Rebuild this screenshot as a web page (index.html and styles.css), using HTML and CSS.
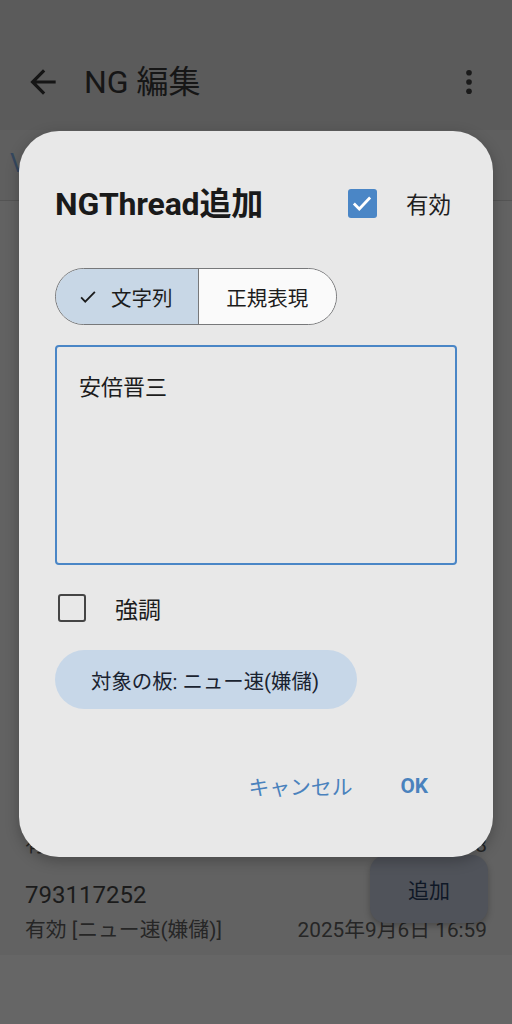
FILE: index.html
```html
<!DOCTYPE html>
<html lang="ja">
<head>
<meta charset="utf-8">
<link rel="stylesheet" href="styles.css">
</head>
<body>
<div class="screen">
  <header class="appbar">
    <svg class="back" viewBox="0 0 24 24" width="38" height="38"><path d="M20 11H7.83l5.59-5.59L12 4l-8 8 8 8 1.41-1.41L7.83 13H20v-2z" fill="#151515"/></svg>
    <div class="app-title">NG 編集</div>
    <svg class="more" viewBox="0 0 24 24" width="26" height="32"><circle cx="12" cy="3.5" r="2.6" fill="#1a1a1a"/><circle cx="12" cy="12" r="2.6" fill="#1a1a1a"/><circle cx="12" cy="20.5" r="2.6" fill="#1a1a1a"/></svg>
  </header>
  <div class="tabs"><span class="tab">V</span></div>
  <div class="list">
    <div class="row">
      <div class="row-id">793117251</div>
      <div class="row-meta"><span>有効 [ニュー速(嫌儲)]</span><span>2025年9月6日 16:58</span></div>
    </div>
    <div class="row">
      <div class="row-id">793117252</div>
      <div class="row-meta"><span>有効 [ニュー速(嫌儲)]</span><span>2025年9月6日 16:59</span></div>
    </div>
  </div>
  <div class="fab">追加</div>

  <div class="dialog">
    <div class="dlg-head">
      <div class="dlg-title">NGThread追加</div>
      <div class="enabled">
        <span class="cb cb-on"><svg viewBox="0 0 24 24" width="26" height="26"><path d="M4.5 12.5l5 5L19.5 7" fill="none" stroke="#fff" stroke-width="2.6"/></svg></span>
        <span class="enabled-label">有効</span>
      </div>
    </div>
    <div class="segmented">
      <div class="seg seg-on"><svg viewBox="0 0 24 24" width="22" height="22"><path d="M4.5 12.5l4.5 4.5L19.5 6.5" fill="none" stroke="#1c1c1c" stroke-width="2"/></svg><span>文字列</span></div>
      <div class="seg">正規表現</div>
    </div>
    <div class="textarea">安倍晋三</div>
    <div class="check-row">
      <span class="cb cb-off"></span>
      <span class="check-label">強調</span>
    </div>
    <div class="chip">対象の板: ニュー速(嫌儲)</div>
    <div class="actions">
      <span class="btn">キャンセル</span>
      <span class="btn btn-ok">OK</span>
    </div>
  </div>
</div>
</body>
</html>
```

FILE: styles.css
```css
* { box-sizing: border-box; }
html, body { margin: 0; padding: 0; }
body {
  font-family: Roboto, "Noto Sans CJK JP", sans-serif;
  background: #666666;
}
.screen {
  position: relative;
  width: 512px;
  height: 1024px;
  overflow: hidden;
  background: #666666;
}
.appbar {
  height: 130px;
  background: #5b5b5b;
  padding: 48px 30px 0 24px;
  display: flex;
  align-items: flex-start;
}
.appbar .back { margin-top: 15px; }
.app-title {
  margin-left: 22px;
  height: 68px;
  line-height: 68px;
  font-size: 32px;
  color: #161616;
  flex: 1;
}
.appbar .more { margin-top: 18px; }
.tabs {
  height: 71px;
  background: #5f5f5f;
  border-bottom: 1px solid #545454;
  padding: 18px 0 0 10px;
}
.tab {
  font-size: 26px;
  color: #34475e;
}
.list {
  background: #626262;
  padding-top: 584px;
}
.row {
  height: 85px;
  padding: 8px 25px 0 25px;
}
.row-id {
  font-size: 24px;
  line-height: 30px;
  color: #1b1b1b;
  margin-top: 2px;
}
.row-meta {
  margin-top: 6px;
  display: flex;
  justify-content: space-between;
  font-size: 20.8px;
  line-height: 28px;
  color: #262626;
}
.fab {
  position: absolute;
  left: 370px;
  top: 855px;
  width: 118px;
  height: 68px;
  border-radius: 16px;
  background: #50535a;
  color: #0f1826;
  font-size: 21px;
  display: flex;
  align-items: center;
  justify-content: center;
  box-shadow: 0 3px 6px rgba(0,0,0,0.25);
}
.dialog {
  position: absolute;
  left: 19px;
  top: 131px;
  width: 474px;
  height: 726px;
  border-radius: 40px;
  background: #e8e8e8;
  padding: 47px 36px 0 36px;
  display: flex;
  flex-direction: column;
  box-shadow: 0 4px 14px rgba(0,0,0,0.25);
}
.dlg-head {
  height: 46px;
  display: flex;
  align-items: center;
  justify-content: space-between;
}
.dlg-title {
  font-size: 32px;
  font-weight: 700;
  color: #1a1a1a;
  letter-spacing: -0.2px;
}
.enabled {
  display: flex;
  align-items: center;
  margin-right: 6px;
}
.cb {
  width: 29px;
  height: 29px;
  border-radius: 3px;
  display: inline-flex;
  align-items: center;
  justify-content: center;
}
.cb-on { background: #4a86c6; margin-top: 4px; }
.cb-off { border: 2.5px solid #454545; width: 28px; height: 28px; }
.enabled-label {
  margin-left: 29px;
  font-size: 22.5px;
  color: #1e1e1e;
  margin-top: 3px;
}
.segmented {
  margin-top: 44px;
  width: 282px;
  height: 57px;
  border: 1.5px solid #77787a;
  border-radius: 29px;
  display: flex;
  overflow: hidden;
}
.seg {
  flex: 1;
  display: flex;
  align-items: center;
  justify-content: center;
  font-size: 20.5px;
  color: #1c1c1c;
  background: #fafafa;
}
.seg-on {
  background: #c8d7e6;
  border-right: 1.5px solid #77787a;
  gap: 12px;
  padding-right: 4px;
}
.textarea {
  margin-top: 20px;
  height: 220px;
  border: 2.5px solid #4a86c6;
  border-radius: 4px;
  padding: 26px 0 0 22px;
  font-size: 22px;
  line-height: 30px;
  color: #1c1c1c;
}
.check-row {
  margin-top: 19px;
  height: 48px;
  display: flex;
  align-items: center;
  padding-left: 3px;
}
.check-label {
  margin-left: 29px;
  font-size: 23px;
  color: #1c1c1c;
}
.chip {
  margin-top: 18px;
  width: 302px;
  height: 59px;
  border-radius: 30px;
  background: #c7d7e8;
  display: flex;
  align-items: center;
  padding-left: 36px;
  font-size: 20.4px;
  color: #1a2330;
}
.actions {
  margin-top: 53px;
  height: 48px;
  display: flex;
  justify-content: flex-end;
  align-items: center;
  gap: 24px;
  padding-right: 17px;
}
.btn {
  padding: 0 12px;
  font-size: 20.8px;
  color: #4a82bd;
}
.btn-ok { font-weight: 700; }
```
